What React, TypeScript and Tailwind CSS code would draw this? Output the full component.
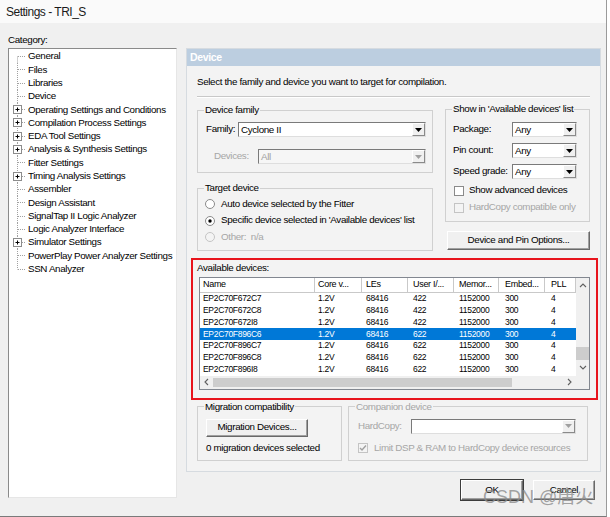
import React from "react";

const treeItems: [string, boolean][] = [
  ["General", false],
  ["Files", false],
  ["Libraries", false],
  ["Device", false],
  ["Operating Settings and Conditions", true],
  ["Compilation Process Settings", true],
  ["EDA Tool Settings", true],
  ["Analysis & Synthesis Settings", true],
  ["Fitter Settings", false],
  ["Timing Analysis Settings", true],
  ["Assembler", false],
  ["Design Assistant", false],
  ["SignalTap II Logic Analyzer", false],
  ["Logic Analyzer Interface", false],
  ["Simulator Settings", true],
  ["PowerPlay Power Analyzer Settings", false],
  ["SSN Analyzer", false],
];

const columns = [
  { name: "Name", pad: "pl-[3px]" },
  { name: "Core v...", pad: "pl-[3px]" },
  { name: "LEs", pad: "pl-[4px]" },
  { name: "User I/...", pad: "pl-[5px]" },
  { name: "Memor...", pad: "pl-[5px]" },
  { name: "Embed...", pad: "pl-[6px]" },
  { name: "PLL", pad: "pl-[6px]" },
];

const devices = [
  ["EP2C70F672C7", "422"],
  ["EP2C70F672C8", "422"],
  ["EP2C70F672I8", "422"],
  ["EP2C70F896C6", "622"],
  ["EP2C70F896C7", "622"],
  ["EP2C70F896C8", "622"],
  ["EP2C70F896I8", "622"],
];

function TreeRow({ label, plus, first, last }: { label: string; plus: boolean; first: boolean; last: boolean }) {
  return (
    <div className="flex h-[13.3px] items-center">
      <svg width="18" height="13.3" viewBox="0 0 18 13.3" className="shrink-0">
        <line x1="8.5" x2="8.5" y1={first ? 6.5 : 0} y2={last ? 6.5 : 13.3} stroke="#a0a0a0" strokeDasharray="1 1" />
        <line x1="9" x2="17" y1="6.5" y2="6.5" stroke="#a0a0a0" strokeDasharray="1 1" />
        {plus && (
          <g>
            <rect x="4.5" y="2.5" width="8" height="8" fill="#fff" stroke="#8c8c8c" />
            <line x1="6.5" x2="10.5" y1="6.5" y2="6.5" stroke="#000" />
            <line x1="8.5" x2="8.5" y1="4.5" y2="8.5" stroke="#000" />
          </g>
        )}
      </svg>
      <span className="whitespace-nowrap pl-px">{label}</span>
    </div>
  );
}

function Arrow({ disabled }: { disabled?: boolean }) {
  return (
    <div className="flex h-full w-[13px] shrink-0 items-center justify-center border border-t-white border-l-white border-r-[#8a8a8a] border-b-[#8a8a8a] bg-[#f0f0f0]">
      <svg width="7" height="4" viewBox="0 0 7 4">
        <polygon points="0,0 7,0 3.5,4" fill={disabled ? "#a0a0a0" : "#000"} />
      </svg>
    </div>
  );
}

function Combo({ value, disabled, className }: { value?: string; disabled?: boolean; className: string }) {
  return (
    <div
      className={`flex h-[15px] shrink-0 border border-t-[#7a7a7a] border-l-[#7a7a7a] border-r-[#dedede] border-b-[#dedede] ${
        disabled ? "bg-[#f6f6f6] text-[#a0a0a0]" : "bg-white"
      } ${className}`}
    >
      <span className="flex-1 pl-[2px] leading-[13px] whitespace-nowrap">{value}</span>
      <Arrow disabled={disabled} />
    </div>
  );
}

function Btn({ children, className }: { children: React.ReactNode; className: string }) {
  return (
    <div
      className={`flex items-center justify-center border border-t-white border-l-white border-r-[#696969] border-b-[#696969] bg-[#f0f0f0] whitespace-nowrap shadow-[inset_-1px_-1px_0_#a0a0a0] ${className}`}
    >
      {children}
    </div>
  );
}

function Group({ title, disabled, className, children }: { title: string; disabled?: boolean; className: string; children: React.ReactNode }) {
  return (
    <fieldset className={`min-w-0 border border-[#d0d0d0] ${className}`}>
      <legend className={`ml-[6px] px-px leading-[12px] whitespace-nowrap ${disabled ? "text-[#a6a6a6]" : ""}`}>{title}</legend>
      {children}
    </fieldset>
  );
}

function Check({ checked, disabled }: { checked?: boolean; disabled?: boolean }) {
  return (
    <svg width="10" height="10" viewBox="0 0 10 10" className="shrink-0">
      <rect x="0.5" y="0.5" width="9" height="9" fill={disabled ? "#f4f4f4" : "#fff"} stroke={disabled ? "#c4c4c4" : "#8a8a8a"} />
      {checked && <polyline points="2,5 4,7 8,2.5" fill="none" stroke={disabled ? "#a0a0a0" : "#000"} strokeWidth="1.4" />}
    </svg>
  );
}

function Radio({ on, disabled }: { on?: boolean; disabled?: boolean }) {
  return (
    <svg width="10" height="10" viewBox="0 0 10 10" className="shrink-0">
      <circle cx="5" cy="5" r="4.5" fill={disabled ? "#f4f4f4" : "#fff"} stroke={disabled ? "#c4c4c4" : "#8a8a8a"} />
      {on && <circle cx="5" cy="5" r="1.7" fill="#000" />}
    </svg>
  );
}

function Chevron({ dir }: { dir: "up" | "down" | "left" | "right" }) {
  const pts = {
    up: "1,5 4,2 7,5",
    down: "1,2 4,5 7,2",
    left: "5,1 2,4 5,7",
    right: "2,1 5,4 2,7",
  }[dir];
  return (
    <svg width="8" height="8" viewBox="0 0 8 8">
      <polyline points={pts} fill="none" stroke="#606060" strokeWidth="1.1" />
    </svg>
  );
}

export default function App() {
  return (
    <div className="relative h-[517px] w-[610px] overflow-hidden bg-white font-['Liberation_Sans',Arial,sans-serif] text-[9.8px] tracking-[-0.35px] text-black">
      <div className="flex h-full w-[607px] flex-col border-r border-b border-r-[#9a9a9a] border-b-[#7a7a7a] bg-[#f0f0f0]">
        {/* title */}
        <div className="flex h-[23px] items-center bg-[#fafafa] pl-[6px] text-[12px] tracking-[-0.5px] text-[#1a1a1a]">Settings - TRI_S</div>

        <div className="flex gap-[9px] pt-[11px] pl-[8px]">
          {/* category tree */}
          <div className="flex flex-col">
            <div className="h-[14px] leading-[12px]">Category:</div>
            <div className="h-[450px] w-[169px] border border-t-[#8a8a8a] border-l-[#8a8a8a] border-r-[#e6e6e6] border-b-[#e6e6e6] bg-white pt-[1px]">
              {treeItems.map(([label, plus], i) => (
                <TreeRow key={label} label={label} plus={plus} first={i === 0} last={i === treeItems.length - 1} />
              ))}
            </div>
          </div>

          {/* device page */}
          <div className="mt-[14px] flex flex-col">
            <div className="flex h-[424px] w-[415px] flex-col border border-[#d6dbe0] bg-[#f3f3f3]">
              <div className="flex h-[17px] items-center bg-[#bccee0] pl-[3px] text-[10.5px] font-bold text-white">Device</div>
              <div className="flex flex-col pr-[10px] pl-[10px]">
                <div className="mt-[10px] leading-[12px]">Select the family and device you want to target for compilation.</div>
                <div className="mt-[8px] border-t border-b border-t-[#c8c8c8] border-b-white" />

                <div className="mt-[5px] flex items-start gap-[12px]">
                  <div className="flex w-[236px] flex-col pt-[1px]">
                    <Group title="Device family" className="pb-[8px]">
                      <div className="mt-[6px] flex h-[15px] items-center">
                        <span className="w-[40px] pl-[8px]">Family:</span>
                        <Combo value="Cyclone II" className="w-[188px]" />
                      </div>
                      <div className="mt-[12px] flex h-[15px] items-center">
                        <span className="w-[60px] pl-[16px] text-[#a6a6a6]">Devices:</span>
                        <Combo value="All" disabled className="w-[168px]" />
                      </div>
                    </Group>
                    <Group title="Target device" className="mt-[9px] pb-[4px]">
                      <div className="mt-[2px] flex flex-col pl-[7px]">
                        <div className="flex h-[16.5px] items-center gap-[6px]">
                          <Radio />
                          <span>Auto device selected by the Fitter</span>
                        </div>
                        <div className="flex h-[16.5px] items-center gap-[6px]">
                          <Radio on />
                          <span>Specific device selected in 'Available devices' list</span>
                        </div>
                        <div className="flex h-[16.5px] items-center gap-[6px] text-[#a6a6a6]">
                          <Radio disabled />
                          <span>Other:&nbsp; n/a</span>
                        </div>
                      </div>
                    </Group>
                  </div>

                  <div className="flex w-[145px] flex-col">
                    <Group title="Show in 'Available devices' list" className="pb-[7px]">
                      {[
                        ["Package:", "mt-[7px]"],
                        ["Pin count:", "mt-[6px]"],
                        ["Speed grade:", "mt-[6px]"],
                      ].map(([label, mt]) => (
                        <div key={label} className={`flex h-[15px] items-center ${mt}`}>
                          <span className="w-[66px] pl-[7px] whitespace-nowrap">{label}</span>
                          <Combo value="Any" className="w-[65px]" />
                        </div>
                      ))}
                      <div className="mt-[5px] flex h-[13px] items-center gap-[5px] pl-[8px]">
                        <Check />
                        <span>Show advanced devices</span>
                      </div>
                      <div className="mt-[4px] flex h-[13px] items-center gap-[5px] pl-[8px] text-[#a6a6a6]">
                        <Check disabled />
                        <span>HardCopy compatible only</span>
                      </div>
                    </Group>
                    <Btn className="mt-[9px] ml-[2px] h-[19px] w-[143px]">Device and Pin Options...</Btn>
                  </div>
                </div>

                <div className="mt-[11px] leading-[12px]">Available devices:</div>
                <div className="mt-[3px] ml-[2px] flex w-[391px] flex-col border border-[#828790] bg-white text-[8.5px] tracking-[-0.3px]">
                  <div className="flex">
                    <div className="flex w-[376px] flex-col">
                      <div className="grid h-[15px] grid-cols-[115px_47px_46px_46px_45px_46px_31px]">
                        {columns.map((c) => (
                          <div key={c.name} className={`flex items-center border-r border-b border-[#c9c9c9] text-[9px] whitespace-nowrap ${c.pad}`}>
                            {c.name}
                          </div>
                        ))}
                      </div>
                      {devices.map(([name, io], i) => (
                        <div
                          key={name}
                          className={`grid h-[11.86px] grid-cols-[115px_47px_46px_46px_45px_46px_31px] items-center leading-[11px] ${
                            i === 3 ? "bg-[#0078d7] text-white" : ""
                          }`}
                        >
                          {[name, "1.2V", "68416", io, "1152000", "300", "4"].map((v, j) => (
                            <span key={j} className={columns[j].pad}>
                              {v}
                            </span>
                          ))}
                        </div>
                      ))}
                    </div>
                    <div className="flex w-[13px] flex-col bg-[#f0f0f0]">
                      <div className="flex h-[17px] items-center justify-center">
                        <Chevron dir="up" />
                      </div>
                      <div className="flex-1" />
                      <div className="h-[13px] bg-[#cdcdcd]" />
                      <div className="flex h-[16px] items-center justify-center">
                        <Chevron dir="down" />
                      </div>
                    </div>
                  </div>
                  <div className="flex h-[13px] bg-[#f0f0f0]">
                    <div className="flex w-[13px] items-center justify-center">
                      <Chevron dir="left" />
                    </div>
                    <div className="my-[2px] w-[299px] bg-[#cdcdcd]" />
                    <div className="flex-1" />
                    <div className="flex w-[13px] items-center justify-center">
                      <Chevron dir="right" />
                    </div>
                    <div className="w-[13px] bg-[#f0f0f0]" />
                  </div>
                </div>

                <div className="mt-[11px] flex gap-[6px]">
                  <Group title="Migration compatibility" className="w-[145px] pb-[6px]">
                    <Btn className="mt-[6px] ml-[8px] h-[18px] w-[102px]">Migration Devices...</Btn>
                    <div className="mt-[5px] pl-[8px] leading-[12px] whitespace-nowrap">0 migration devices selected</div>
                  </Group>
                  <Group title="Companion device" disabled className="w-[240px]">
                    <div className="mt-[6px] flex h-[15px] items-center">
                      <span className="w-[62px] pl-[9px] text-[#a6a6a6]">HardCopy:</span>
                      <Combo disabled className="w-[165px] bg-white" />
                    </div>
                    <div className="mt-[8px] flex h-[13px] items-center gap-[6px] pl-[9px] text-[#a6a6a6]">
                      <Check checked disabled />
                      <span className="whitespace-nowrap">Limit DSP &amp; RAM to HardCopy device resources</span>
                    </div>
                  </Group>
                </div>
              </div>
            </div>

            <div className="mt-[8px] flex justify-end gap-[10px] pr-[6px]">
              <Btn className="h-[20px] w-[62px] outline outline-1 outline-[#3c3c3c]">OK</Btn>
              <Btn className="h-[20px] w-[62px]">Cancel</Btn>
            </div>
          </div>
        </div>
      </div>

      {/* annotation frame */}
      <div className="pointer-events-none absolute top-[258px] left-[191px] h-[142px] w-[407px] border-[2.5px] border-[#e8141c]" />
      {/* watermark */}
      <div className="pointer-events-none absolute top-[487px] left-[483px] font-['Liberation_Sans','Noto_Sans_CJK_SC',sans-serif] text-[18px] leading-[20px] tracking-normal whitespace-nowrap text-[#8c8c8c]/80">
        CSDN @唐火
      </div>
    </div>
  );
}
